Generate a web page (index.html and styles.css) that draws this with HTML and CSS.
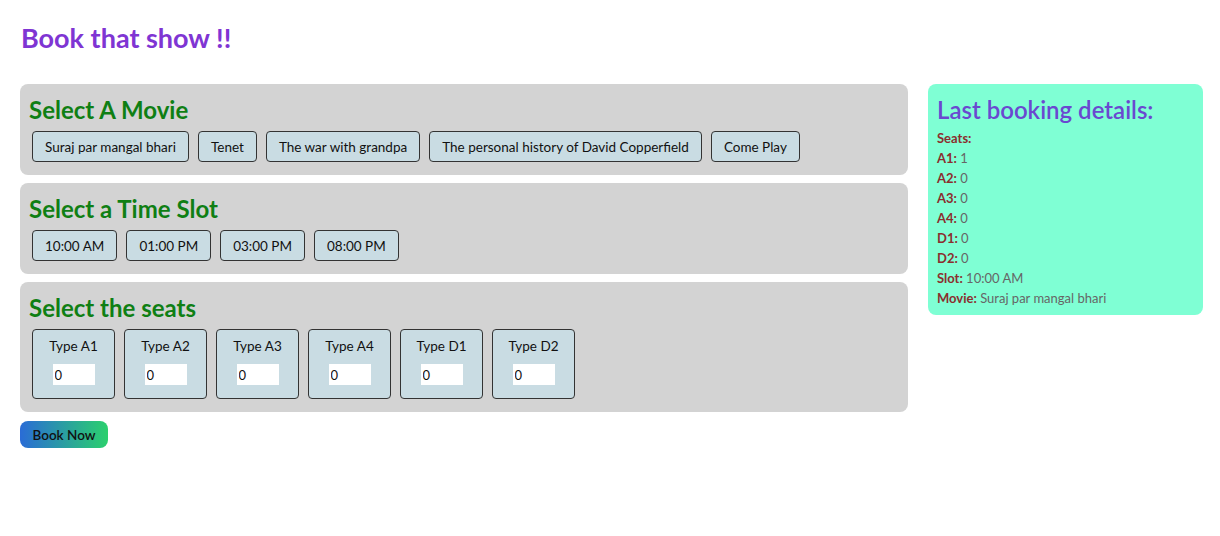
FILE: index.html
```html
<!DOCTYPE html>
<html>
<head>
<meta charset="utf-8">
<title>Book that show</title>
<link rel="stylesheet" href="styles.css">
</head>
<body>
<div class="page">
  <h1 class="title">Book that show !!</h1>
  <div class="layout">
    <div class="main">
      <section class="panel">
        <h2 class="panel-title">Select A Movie</h2>
        <div class="row">
          <button class="opt">Suraj par mangal bhari</button>
          <button class="opt">Tenet</button>
          <button class="opt">The war with grandpa</button>
          <button class="opt">The personal history of David Copperfield</button>
          <button class="opt">Come Play</button>
        </div>
      </section>
      <section class="panel">
        <h2 class="panel-title">Select a Time Slot</h2>
        <div class="row">
          <button class="opt slot">10:00 AM</button>
          <button class="opt slot">01:00 PM</button>
          <button class="opt slot">03:00 PM</button>
          <button class="opt slot">08:00 PM</button>
        </div>
      </section>
      <section class="panel">
        <h2 class="panel-title">Select the seats</h2>
        <div class="row">
          <div class="seat"><span class="seat-label">Type A1</span><input class="seat-input" type="text" value="0"></div>
          <div class="seat"><span class="seat-label">Type A2</span><input class="seat-input" type="text" value="0"></div>
          <div class="seat"><span class="seat-label">Type A3</span><input class="seat-input" type="text" value="0"></div>
          <div class="seat"><span class="seat-label">Type A4</span><input class="seat-input" type="text" value="0"></div>
          <div class="seat"><span class="seat-label">Type D1</span><input class="seat-input" type="text" value="0"></div>
          <div class="seat"><span class="seat-label">Type D2</span><input class="seat-input" type="text" value="0"></div>
        </div>
      </section>
      <div class="actions">
        <button class="book">Book Now</button>
      </div>
    </div>
    <aside class="last">
      <h2 class="last-title">Last booking details:</h2>
      <div class="line"><b>Seats:</b></div>
      <div class="line"><b>A1:</b> 1</div>
      <div class="line"><b>A2:</b> 0</div>
      <div class="line"><b>A3:</b> 0</div>
      <div class="line"><b>A4:</b> 0</div>
      <div class="line"><b>D1:</b> 0</div>
      <div class="line"><b>D2:</b> 0</div>
      <div class="line"><b>Slot:</b> 10:00 AM</div>
      <div class="line"><b>Movie:</b> Suraj par mangal bhari</div>
    </aside>
  </div>
</div>
</body>
</html>
```
FILE: styles.css
```css
* { box-sizing: border-box; }
body {
  margin: 0;
  font-family: Lato, "Noto Sans", "Liberation Sans", sans-serif;
  color: #000;
  background: #fff;
}
.page {
  padding: 22px 17px 20px 20px;
}
.title {
  margin: 0 0 0 1px;
  font-size: 27px;
  line-height: 32px;
  font-weight: 700;
  color: #7f35d3;
  height: 62px;
}
.layout {
  display: grid;
  grid-template-columns: 888px 275px;
  column-gap: 20px;
  align-items: start;
}
.main {
  display: flex;
  flex-direction: column;
  gap: 8px;
}
.panel {
  background: #d3d3d3;
  border-radius: 8px;
  padding: 8px 8px 13px 8px;
}
.panel-title {
  margin: 0 0 4px 1px;
  font-size: 24px;
  line-height: 35px;
  font-weight: 700;
  color: #0f7f14;
}
.row {
  display: flex;
  gap: 9px;
  padding-left: 4px;
}
.opt {
  font-family: inherit;
  font-size: 13.5px;
  height: 31px;
  padding: 0 12px;
  background: #c9dce3;
  border: 1px solid #333;
  border-radius: 4px;
  color: #111;
}
.opt.slot {
  padding: 0 12px;
}
.seat {
  width: 83px;
  height: 70px;
  background: #c9dce3;
  border: 1px solid #333;
  border-radius: 4px;
  display: flex;
  flex-direction: column;
  align-items: center;
  padding-top: 7px;
}
.seat-label {
  font-size: 13.5px;
  line-height: 18px;
  color: #111;
}
.seat-input {
  margin-top: 9px;
  width: 42px;
  height: 21px;
  border: none;
  background: #fff;
  padding: 0 2px;
  font-family: inherit;
  font-size: 13px;
  color: #111;
}
.actions {
  display: flex;
  padding-top: 1px;
}
.book {
  font-family: inherit;
  font-size: 13.5px;
  font-weight: 600;
  height: 27px;
  width: 88px;
  padding: 0;
  border: none;
  border-radius: 8px;
  background: linear-gradient(to right, #2a6cd6, #2bd06d);
  color: #111;
}
.last {
  background: #7fffd4;
  border-radius: 8px;
  padding: 8px 8px 7px 9px;
}
.last-title {
  margin: 0 0 1px 0;
  font-size: 24px;
  line-height: 35px;
  font-weight: 600;
  color: #6a48d0;
}
.line {
  font-size: 13px;
  line-height: 20px;
  color: #666;
}
.line b {
  color: #8b2e2e;
  font-weight: 700;
}
```
